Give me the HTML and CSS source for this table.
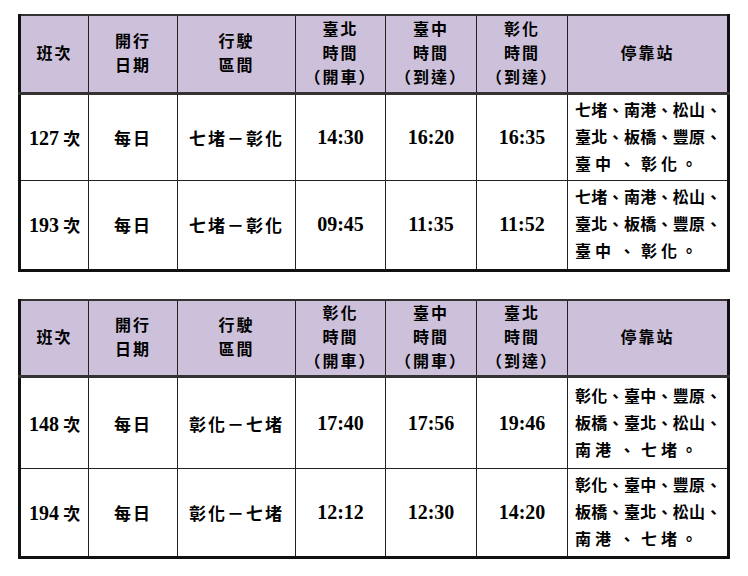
FILE: index.html
```html
<!DOCTYPE html>
<html lang="zh-Hant">
<head>
<meta charset="utf-8">
<title>班次時刻表</title>
<link rel="stylesheet" href="styles.css">
</head>
<body>
<div class="page">
  <table class="tt t1">
    <colgroup>
      <col class="c1"><col class="c2"><col class="c3"><col class="c4"><col class="c5"><col class="c6"><col class="c7">
    </colgroup>
    <thead>
      <tr class="hd">
        <th>班次</th>
        <th>開行<br>日期</th>
        <th>行駛<br>區間</th>
        <th>臺北<br>時間<br>（開車）</th>
        <th>臺中<br>時間<br>（到達）</th>
        <th>彰化<br>時間<br>（到達）</th>
        <th>停靠站</th>
      </tr>
    </thead>
    <tbody>
      <tr class="ra">
        <td><span class="n">127</span> 次</td>
        <td class="sp">每日</td>
        <td class="sp">七堵－彰化</td>
        <td class="n">14:30</td>
        <td class="n">16:20</td>
        <td class="n">16:35</td>
        <td class="st">七堵、南港、松山、<br>臺北、板橋、豐原、<br><span class="wide">臺中<span class="dun">、</span>彰化。</span></td>
      </tr>
      <tr class="rb">
        <td><span class="n">193</span> 次</td>
        <td class="sp">每日</td>
        <td class="sp">七堵－彰化</td>
        <td class="n">09:45</td>
        <td class="n">11:35</td>
        <td class="n">11:52</td>
        <td class="st">七堵、南港、松山、<br>臺北、板橋、豐原、<br><span class="wide">臺中<span class="dun">、</span>彰化。</span></td>
      </tr>
    </tbody>
  </table>

  <table class="tt t2">
    <colgroup>
      <col class="c1"><col class="c2"><col class="c3"><col class="c4"><col class="c5"><col class="c6"><col class="c7">
    </colgroup>
    <thead>
      <tr class="hd">
        <th>班次</th>
        <th>開行<br>日期</th>
        <th>行駛<br>區間</th>
        <th>彰化<br>時間<br>（開車）</th>
        <th>臺中<br>時間<br>（開車）</th>
        <th>臺北<br>時間<br>（到達）</th>
        <th>停靠站</th>
      </tr>
    </thead>
    <tbody>
      <tr class="ra">
        <td><span class="n">148</span> 次</td>
        <td class="sp">每日</td>
        <td class="sp">彰化－七堵</td>
        <td class="n">17:40</td>
        <td class="n">17:56</td>
        <td class="n">19:46</td>
        <td class="st">彰化、臺中、豐原、<br>板橋、臺北、松山、<br><span class="wide">南港<span class="dun">、</span>七堵。</span></td>
      </tr>
      <tr class="rb">
        <td><span class="n">194</span> 次</td>
        <td class="sp">每日</td>
        <td class="sp">彰化－七堵</td>
        <td class="n">12:12</td>
        <td class="n">12:30</td>
        <td class="n">14:20</td>
        <td class="st">彰化、臺中、豐原、<br>板橋、臺北、松山、<br><span class="wide">南港<span class="dun">、</span>七堵。</span></td>
      </tr>
    </tbody>
  </table>
</div>
</body>
</html>
```

FILE: styles.css
```css
html, body {
  margin: 0;
  padding: 0;
  background: #ffffff;
}

.page {
  padding: 14px 0 0 18px;
  display: flex;
  flex-direction: column;
  gap: 27px;
  align-items: flex-start;
}

.tt {
  border-collapse: collapse;
  table-layout: fixed;
  width: 712px;
  border: 3px solid #111111;
  border-top: 2px solid #333333;
  font-family: "Liberation Serif", "Noto Sans CJK TC", serif;
  font-weight: 700;
  color: #000000;
}

.c1 { width: 69px; }
.c2 { width: 89px; }
.c3 { width: 118px; }
.c4 { width: 90px; }
.c5 { width: 91px; }
.c6 { width: 91px; }
.c7 { width: 161px; }

.tt th,
.tt td {
  border: 1px solid #222222;
  padding: 0;
  text-align: center;
  vertical-align: middle;
}

.tt th {
  background: #ccc0da;
  font-size: 16px;
  line-height: 24px;
  letter-spacing: 2px;
  font-weight: 700;
}

.hd th {
  border-bottom: 3px solid #333333;
}

.t1 .hd { height: 78px; }
.t1 .ra { height: 87px; }
.t1 .rb { height: 90px; }

.t2 .hd { height: 77px; }
.t2 .ra { height: 92px; }
.t2 .rb { height: 89px; }

.tt td {
  font-size: 17px;
  white-space: nowrap;
}

.tt td.sp {
  letter-spacing: 2px;
}

.tt .n {
  font-size: 20px;
  font-family: "Liberation Serif", serif;
  font-weight: 700;
}

.tt td.st {
  text-align: left;
  font-size: 16px;
  line-height: 27px;
  padding-left: 7px;
  letter-spacing: 0.3px;
}

.wide {
  letter-spacing: 4px;
}

.dun {
  margin: 0 2px 0 4px;
}
```
